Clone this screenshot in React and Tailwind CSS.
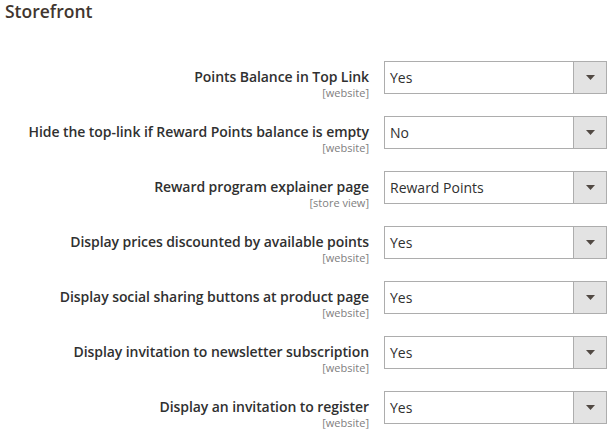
const rows = [
  { label: "Points Balance in Top Link", scope: "[website]", value: "Yes" },
  { label: "Hide the top-link if Reward Points balance is empty", scope: "[website]", value: "No" },
  { label: "Reward program explainer page", scope: "[store view]", value: "Reward Points" },
  { label: "Display prices discounted by available points", scope: "[website]", value: "Yes" },
  { label: "Display social sharing buttons at product page", scope: "[website]", value: "Yes" },
  { label: "Display invitation to newsletter subscription", scope: "[website]", value: "Yes" },
  { label: "Display an invitation to register", scope: "[website]", value: "Yes" },
];

const SelectBox = ({ value }) => (
  <div className="flex h-[33px] w-[223px] border border-[#adadad] bg-white">
    <div className="flex-1 flex items-center pl-[5px] text-[14px] text-[#303030]">{value}</div>
    <div className="w-[33px] flex items-center justify-center bg-[#e3e3e3] border-l border-[#adadad]">
      <svg width="9" height="5" viewBox="0 0 9 5"><path d="M0 0h9L4.5 5z" fill="#514943" /></svg>
    </div>
  </div>
);

export default function App() {
  return (
    <div className="w-[616px] h-[435px] bg-white overflow-hidden font-['Open_Sans',sans-serif] text-[#303030]">
      <h2 className="pl-[5px] pt-[1px] text-[17.5px] leading-[20px] font-semibold text-[#41362f]">Storefront</h2>
      <div className="mt-[40px] flex flex-col">
        {rows.map((r) => (
          <div key={r.label} className="flex items-start h-[55px]">
            <div className="w-[369px] flex flex-col items-end pt-[6px]">
              <span className="text-[14px] leading-[20px] font-semibold tracking-[-0.005em] text-[#303030]">{r.label}</span>
              <span className="text-[11px] leading-[12px] text-[#808080]">{r.scope}</span>
            </div>
            <div className="ml-[15px]">
              <SelectBox value={r.value} />
            </div>
          </div>
        ))}
      </div>
    </div>
  );
}
